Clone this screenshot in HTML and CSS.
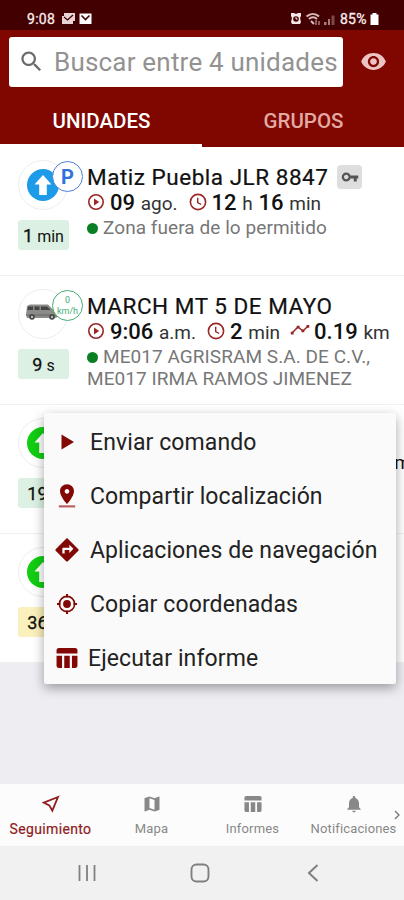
FILE: index.html
```html
<!DOCTYPE html>
<html lang="es">
  <head>
    <meta charset="UTF-8" />
    <meta name="viewport" content="width=device-width, initial-scale=1.0" />
    <link rel="stylesheet" href="styles.css">
    <title>Unidades</title>
  </head>
  <body>
    <svg class="sprite" width="0" height="0">
      <symbol id="play" viewBox="0 0 18 18">
        <circle cx="9" cy="9" r="7.2" fill="none" stroke="currentColor" stroke-width="1.6" />
        <path d="M7 5.6v6.8L12.2 9z" fill="currentColor" />
      </symbol>
      <symbol id="clock" viewBox="0 0 18 18">
        <circle cx="9" cy="9" r="7.6" fill="none" stroke="currentColor" stroke-width="1.6" />
        <path d="M8.7 4.8v4.7l3.5 2" fill="none" stroke="currentColor" stroke-width="1.4" />
      </symbol>
      <symbol id="table" viewBox="2.5 3 20 18">
        <path d="M10 10h5v11h-5zM17 21h3c1.1 0 2-.9 2-2v-9h-5v11zm3-18H5c-1.1 0-2 .9-2 2v3h19V5c0-1.1-.9-2-2-2zM3 19c0 1.1.9 2 2 2h3V10H3v9z" fill="currentColor" />
      </symbol>
      <symbol id="arrow" viewBox="0 0 32 32">
        <circle cx="16" cy="16" r="16" fill="currentColor" />
        <path d="M16 6l8.5 9.5h-4.7V26h-7.6V15.5H7.5z" fill="#fff" />
      </symbol>
    </svg>

    <div class="statusbar">
      <span class="clock">9:08</span>
      <svg width="32" height="14" viewBox="0 0 32 14">
        <path d="M3 1h11v8h-2v3H1V4h2z" fill="#e8d4d4" />
        <path d="M3 5l3.5 3L12 3" fill="none" stroke="#420000" stroke-width="1.3" />
        <path d="M18.5 1.5h12V12h-12z" fill="#fff" />
        <path d="M20.5 3.5l4 4 4-4" fill="none" stroke="#420000" stroke-width="1.6" />
      </svg>
      <svg class="signals" width="46" height="14" viewBox="0 0 46 14">
        <path d="M1 1h3l2 1 2-1h3v3l-1 2 1 4-1 2H2l-1-2 1-4-1-2z" fill="#f6e6e6" />
        <circle cx="6" cy="7" r="2.8" fill="#420000" />
        <path d="M6 5.2V7h1.5" fill="none" stroke="#fff" />
        <path d="M16.5 4.5c4-3.5 9-3.5 12.500 0M19 7c2.500-2.200 5.500-2.200 8 0M21 9l3 3" fill="none" stroke="#d9bcbc" stroke-width="2" />
        <path d="M26 8v5M29 9v4" stroke="#b98c8c" stroke-width="1.3" />
        <path d="M34 10h2.5v3H34zM38 7h2v6h-2z" fill="#a97b7b" />
        <path d="M41.5 3.500h3V13h-3z" fill="#7c4848" />
      </svg>
      <span class="charge">85%</span>
      <svg width="9" height="12" viewBox="0 0 9 12"><path d="M2.500 0h4v1.500h2V12H.5V1.500h2z" fill="#fff" /></svg>
    </div>

    <header class="header">
      <div class="search-row">
        <div class="search">
          <svg width="27" height="27" viewBox="0 0 24 24"><path d="M15.5 14h-.79l-.28-.27C15.41 12.59 16 11.11 16 9.5 16 5.91 13.09 3 9.5 3S3 5.91 3 9.5 5.91 16 9.5 16c1.61 0 3.09-.59 4.23-1.57l.27.28v.79l5 4.99L20.49 19l-4.99-5zm-6 0C7.01 14 5 11.99 5 9.5S7.01 5 9.5 5 14 7.01 14 9.5 11.99 14 9.5 14z" fill="#6b6b6b" /></svg>
          <span class="placeholder">Buscar entre 4 unidades</span>
        </div>
        <svg width="27" height="27" viewBox="0 0 24 24"><path d="M12 4.5C7 4.5 2.73 7.61 1 12c1.73 4.39 6 7.5 11 7.5s9.27-3.11 11-7.5c-1.73-4.39-6-7.5-11-7.5zM12 17c-2.76 0-5-2.24-5-5s2.24-5 5-5 5 2.24 5 5-2.24 5-5 5zm0-8c-1.66 0-3 1.34-3 3s1.34 3 3 3 3-1.34 3-3-1.34-3-3-3z" fill="#ecc4c2" /></svg>
      </div>
      <div class="tabs">
        <div class="tab selected">UNIDADES</div>
        <div class="tab">GRUPOS</div>
      </div>
    </header>

    <main class="units">
      <div class="unit">
        <div class="side">
          <div class="avatar blue">
            <svg width="32" height="32"><use href="#arrow" /></svg>
            <span class="badge parking">P</span>
          </div>
          <div class="age"><b>1</b> min</div>
        </div>
        <div class="info">
          <div class="name">Matiz Puebla JLR 8847
            <span class="key"><svg width="18" height="18" viewBox="0 0 24 24"><path fill-rule="evenodd" d="M12.65 10C11.83 7.67 9.61 6 7 6c-3.31 0-6 2.69-6 6s2.69 6 6 6c2.61 0 4.83-1.67 5.65-4H17v4h4v-4h2v-4H12.65zM7 15c-1.7 0-3-1.3-3-3s1.3-3 3-3 3 1.3 3 3-1.3 3-3 3z" fill="#555" /></svg></span>
          </div>
          <div class="meta">
            <span class="stat"><svg width="18" height="18"><use href="#play" /></svg><b>09</b> ago.</span>
            <span class="stat"><svg width="18" height="18"><use href="#clock" /></svg><b>12</b> h <b>16</b> min</span>
          </div>
          <div class="place"><i class="dot"></i>Zona fuera de lo permitido</div>
        </div>
      </div>

      <div class="unit">
        <div class="side">
          <div class="avatar">
            <svg class="van" width="34" height="18" viewBox="0 0 34 18">
              <path d="M2 3l3-1.500h18l5 5 4 1.500 1 6-3 1H2L1 12z" fill="#8b8b88" />
              <path d="M3 3.500h5v3.500H2.500zM9.500 3.500h5v3.500h-5zM16 3.500h6l3.500 3.500H16z" fill="#444" />
              <path d="M1 12h31" stroke="#666" />
              <circle cx="7" cy="14" r="2.8" fill="#444" /><circle cx="27" cy="14" r="2.8" fill="#444" />
              <circle cx="7" cy="14" r="1.2" fill="#bbb" /><circle cx="27" cy="14" r="1.2" fill="#bbb" />
            </svg>
            <span class="badge speed"><span>0</span><span>km/h</span></span>
          </div>
          <div class="age"><b>9</b> s</div>
        </div>
        <div class="info">
          <div class="name">MARCH MT 5 DE MAYO</div>
          <div class="meta">
            <span class="stat"><svg width="18" height="18"><use href="#play" /></svg><b>9:06</b> a.m.</span>
            <span class="stat"><svg width="18" height="18"><use href="#clock" /></svg><b>2</b> min</span>
            <span class="stat distance"><svg width="20" height="18" viewBox="0 0 20 18"><path d="M2 12l6-6 5 4 5-5" fill="none" stroke="currentColor" stroke-width="1.5" /><path d="M.8 10.800h2.800v2.800H.8zM6.700 4.800h2.800v2.800H6.700zM11.500 8.500h2.800v2.800h-2.800zM16.500 4h2.800v2.800h-2.800z" fill="currentColor" /></svg><b>0.19</b> km</span>
          </div>
          <div class="place"><i class="dot"></i>ME017 AGRISRAM S.A. DE C.V.,</div>
          <div class="place">ME017 IRMA RAMOS JIMENEZ</div>
        </div>
      </div>

      <div class="unit">
        <div class="side">
          <div class="avatar green"><svg width="32" height="32"><use href="#arrow" /></svg></div>
          <div class="age"><b>19</b> s</div>
        </div>
        <div class="info tail">km</div>
      </div>

      <div class="unit">
        <div class="side">
          <div class="avatar green"><svg width="32" height="32"><use href="#arrow" /></svg></div>
          <div class="age old"><b>36</b> s</div>
        </div>
      </div>
    </main>

    <div class="menu">
      <div class="item">
        <svg width="28" height="28" viewBox="0 0 28 28"><path d="M8.500 6.500v15L21 14z" fill="currentColor" /></svg>
        <span>Enviar comando</span>
      </div>
      <div class="item">
        <svg width="28" height="28" viewBox="0 0 24 24"><path d="M18 8c0-3.310-2.690-6-6-6S6 4.690 6 8c0 4.500 6 11 6 11s6-6.500 6-11zm-8 0c0-1.100.9-2 2-2s2 .9 2 2-.89 2-2 2c-1.100 0-2-.9-2-2z" fill="currentColor" /><path d="M5 20v1.800h14V20z" fill="#b55e5e" /></svg>
        <span>Compartir localización</span>
      </div>
      <div class="item">
        <svg width="28" height="28" viewBox="0 0 24 24"><path d="M21.71 11.29l-9-9c-.39-.39-1.02-.39-1.41 0l-9 9c-.39.39-.39 1.02 0 1.41l9 9c.39.39 1.02.39 1.41 0l9-9c.39-.38.39-1.01 0-1.41zM14 14.5V12h-4v3H8v-4c0-.55.45-1 1-1h5V7.5l3.5 3.5-3.5 3.5z" fill="currentColor" /></svg>
        <span>Aplicaciones de navegación</span>
      </div>
      <div class="item">
        <svg width="28" height="28" viewBox="0 0 28 28"><circle cx="14" cy="14" r="7.6" fill="none" stroke="currentColor" stroke-width="1.6" /><circle cx="14" cy="14" r="3.9" fill="currentColor" /><path d="M14 4v3.500M14 20.500V24M4 14h3.500M20.500 14H24" stroke="currentColor" stroke-width="2" /></svg>
        <span>Copiar coordenadas</span>
      </div>
      <div class="item last">
        <svg width="22" height="20"><use href="#table" /></svg>
        <span>Ejecutar informe</span>
      </div>
    </div>

    <nav class="bottom">
      <div class="link active">
        <svg width="20" height="20" viewBox="0 0 20 20"><path d="M17 3L2.800 8.700l5.500 2.700 3 5.300z" fill="none" stroke="currentColor" stroke-width="1.8" /></svg>
        <span>Seguimiento</span>
      </div>
      <div class="link">
        <svg width="20" height="20" viewBox="0 0 24 24"><path d="M20.5 3l-.16.03L15 5.1 9 3 3.36 4.9c-.21.07-.36.25-.36.48V20.500c0 .28.22.5.5.5l.16-.03L9 18.9l6 2.1 5.64-1.900c.21-.07.36-.25.36-.48V3.500c0-.28-.22-.5-.5-.5zM15 19l-6-2.110V5l6 2.110V19z" fill="currentColor" /></svg>
        <span>Mapa</span>
      </div>
      <div class="link">
        <svg width="18" height="20"><use href="#table" /></svg>
        <span>Informes</span>
      </div>
      <div class="link">
        <svg width="20" height="20" viewBox="0 0 24 24"><path d="M12 22c1.100 0 2-.9 2-2h-4c0 1.100.89 2 2 2zm6-6v-5c0-3.070-1.640-5.640-4.500-6.320V4c0-.83-.67-1.500-1.500-1.500s-1.500.67-1.500 1.500v.68C7.630 5.360 6 7.920 6 11v5l-2 2v1h16v-1l-2-2z" fill="currentColor" /></svg>
        <span>Notificaciones</span>
      </div>
      <svg class="more" width="6" height="10" viewBox="0 0 6 10"><path d="M1 1l4 4-4 4" fill="none" stroke="#777" stroke-width="1.3" /></svg>
    </nav>

    <div class="system">
      <svg width="18" height="18" viewBox="0 0 18 18"><path d="M1.500 1v16M9 1v16M16.500 1v16" stroke="#808080" stroke-width="1.8" /></svg>
      <svg width="20" height="20" viewBox="0 0 20 20"><rect x="1.5" y="1.5" width="17" height="17" rx="5" fill="none" stroke="#808080" stroke-width="1.9" /></svg>
      <svg width="12" height="18" viewBox="0 0 12 18"><path d="M10.500 1L2 9l8.500 8" fill="none" stroke="#808080" stroke-width="2" /></svg>
    </div>
  </body>
</html>
```
FILE: styles.css
```css
body {
  --red: #800600;
  margin: 0;
  height: 900px;
  display: flex;
  flex-direction: column;
  position: relative;
  overflow: hidden;
  background: #ededf2;
  color: #111;
  font-family: Roboto, "Liberation Sans", sans-serif;
}
svg {
  display: block;
  flex: none;
}
b {
  font-weight: 500;
}
.sprite {
  position: absolute;
}
.statusbar {
  height: 30px;
  box-sizing: border-box;
  padding: 8px 25px 0 27px;
  display: flex;
  align-items: center;
  background: #420000;
  color: #fbeeee;
  font-size: 14px;
  -webkit-text-stroke: 0.3px #fbeeee;
}
.clock {
  width: 34px;
  letter-spacing: 0.3px;
}
.signals {
  margin-left: auto;
  margin-right: 4px;
}
.charge {
  width: 30px;
  letter-spacing: 0.2px;
}
.header {
  height: 117px;
  background: var(--red);
}
.search-row {
  height: 63px;
  padding: 0 17px 0 9px;
  display: flex;
  align-items: center;
  justify-content: space-between;
}
.search {
  width: 334px;
  height: 50px;
  box-sizing: border-box;
  padding-left: 9px;
  display: flex;
  align-items: center;
  background: #fff;
  border-radius: 3px;
}
.placeholder {
  margin-left: 9px;
  color: #929292;
  font-size: 26px;
  letter-spacing: 0.2px;
  white-space: nowrap;
}
.tabs {
  display: flex;
  height: 54px;
}
.tab {
  flex: 1;
  text-align: center;
  text-indent: 1px;
  line-height: 56px;
  height: 51px;
  font-size: 20.5px;
  font-weight: 500;
  color: #e2aaa3;
}
.tab.selected {
  color: #fff;
  border-bottom: 3px solid #fff;
}
.unit {
  height: 129px;
  box-sizing: border-box;
  padding-left: 18px;
  display: flex;
  background: #fff;
  border-bottom: 1px solid #f1f1f1;
}
.side {
  width: 51px;
  padding-top: 13px;
}
.avatar {
  position: relative;
  width: 50px;
  height: 50px;
  box-sizing: border-box;
  border: 1px solid #ededed;
  border-radius: 50%;
  display: flex;
  align-items: center;
  justify-content: center;
}
.blue {
  color: #1e9be8;
}
.green {
  color: #12cd12;
}
.badge {
  position: absolute;
  left: 33px;
  top: 0;
  width: 31px;
  height: 31px;
  box-sizing: border-box;
  border-radius: 50%;
  background: #fff;
  text-align: center;
}
.parking {
  border: 1.5px solid #4a7fd8;
  color: #2f72dc;
  font-size: 20px;
  font-weight: 700;
  line-height: 30px;
}
.speed {
  border: 1.5px solid #45ad74;
  color: #45ad74;
  display: flex;
  flex-direction: column;
  font-size: 9px;
  line-height: 11px;
  padding-top: 4px;
}
.van {
  margin-top: -4px;
  margin-right: 2px;
}
.age {
  margin-top: 10px;
  height: 30px;
  border-radius: 3px;
  background: #dcf1e4;
  text-align: center;
  line-height: 32px;
  font-size: 16px;
  white-space: nowrap;
}
.age b {
  font-size: 18px;
  font-weight: 400;
  -webkit-text-stroke: 0.3px #111;
}
.old {
  background: #faf0bb;
}
.info {
  margin-left: 18px;
  padding-top: 17px;
  white-space: nowrap;
}
.name {
  display: flex;
  align-items: center;
  height: 26px;
  font-size: 22.5px;
  letter-spacing: 0.52px;
  -webkit-text-stroke: 0.2px #111;
}
.key {
  width: 25px;
  height: 24px;
  margin-left: 9px;
  display: flex;
  align-items: center;
  justify-content: center;
  background: #dedede;
  border-radius: 4px;
}
.meta {
  height: 25px;
  display: flex;
  align-items: baseline;
  gap: 11px;
  line-height: 26px;
  font-size: 19px;
  word-spacing: 1px;
  color: #333;
}
.stat b {
  font-size: 22px;
  color: #111;
}
.stat svg {
  display: inline-block;
  vertical-align: -1px;
  margin-right: 5px;
  color: #9b2626;
}
.distance svg {
  margin-left: -1px;
  margin-right: 4px;
  vertical-align: 0;
}
.place {
  height: 22px;
  line-height: 22px;
  display: flex;
  align-items: center;
  color: #777;
  font-size: 19px;
  letter-spacing: 0.06px;
}
.meta + .place {
  margin-top: 2px;
}
.dot {
  width: 11px;
  height: 11px;
  margin-right: 5px;
  border-radius: 50%;
  background: #0b7f24;
}
.tail {
  margin-left: auto;
  margin-right: -7px;
  padding-top: 46px;
  font-size: 19px;
}
.menu {
  position: absolute;
  left: 44px;
  top: 413px;
  width: 352px;
  height: 271px;
  box-sizing: border-box;
  padding: 2px 0 0 9px;
  background: #fafafa;
  border-radius: 2px;
  box-shadow: 0 4px 12px rgba(0, 0, 0, 0.35);
}
.item {
  height: 54px;
  display: flex;
  align-items: center;
  gap: 9px;
  color: #222;
  font-size: 23px;
  letter-spacing: 0.1px;
  white-space: nowrap;
}
.item svg {
  color: #820805;
}
.last {
  padding-left: 3px;
  gap: 10px;
}
.bottom {
  margin-top: auto;
  position: relative;
  height: 62px;
  display: flex;
  background: #fcfcfc;
}
.link {
  width: 101px;
  padding-top: 10px;
  display: flex;
  flex-direction: column;
  align-items: center;
  gap: 7px;
  color: #888;
  font-size: 13px;
  letter-spacing: 0.15px;
  line-height: 16px;
}
.link.active {
  color: #8f1c1c;
  font-size: 14px;
  letter-spacing: 0.35px;
  -webkit-text-stroke: 0.2px #8f1c1c;
}
.more {
  position: absolute;
  right: 4px;
  top: 26px;
}
.system {
  height: 54px;
  display: flex;
  align-items: center;
  gap: 94px;
  padding-left: 78px;
  background: #f1f1f1;
}
.system svg:last-child {
  margin-left: 3px;
}
```
